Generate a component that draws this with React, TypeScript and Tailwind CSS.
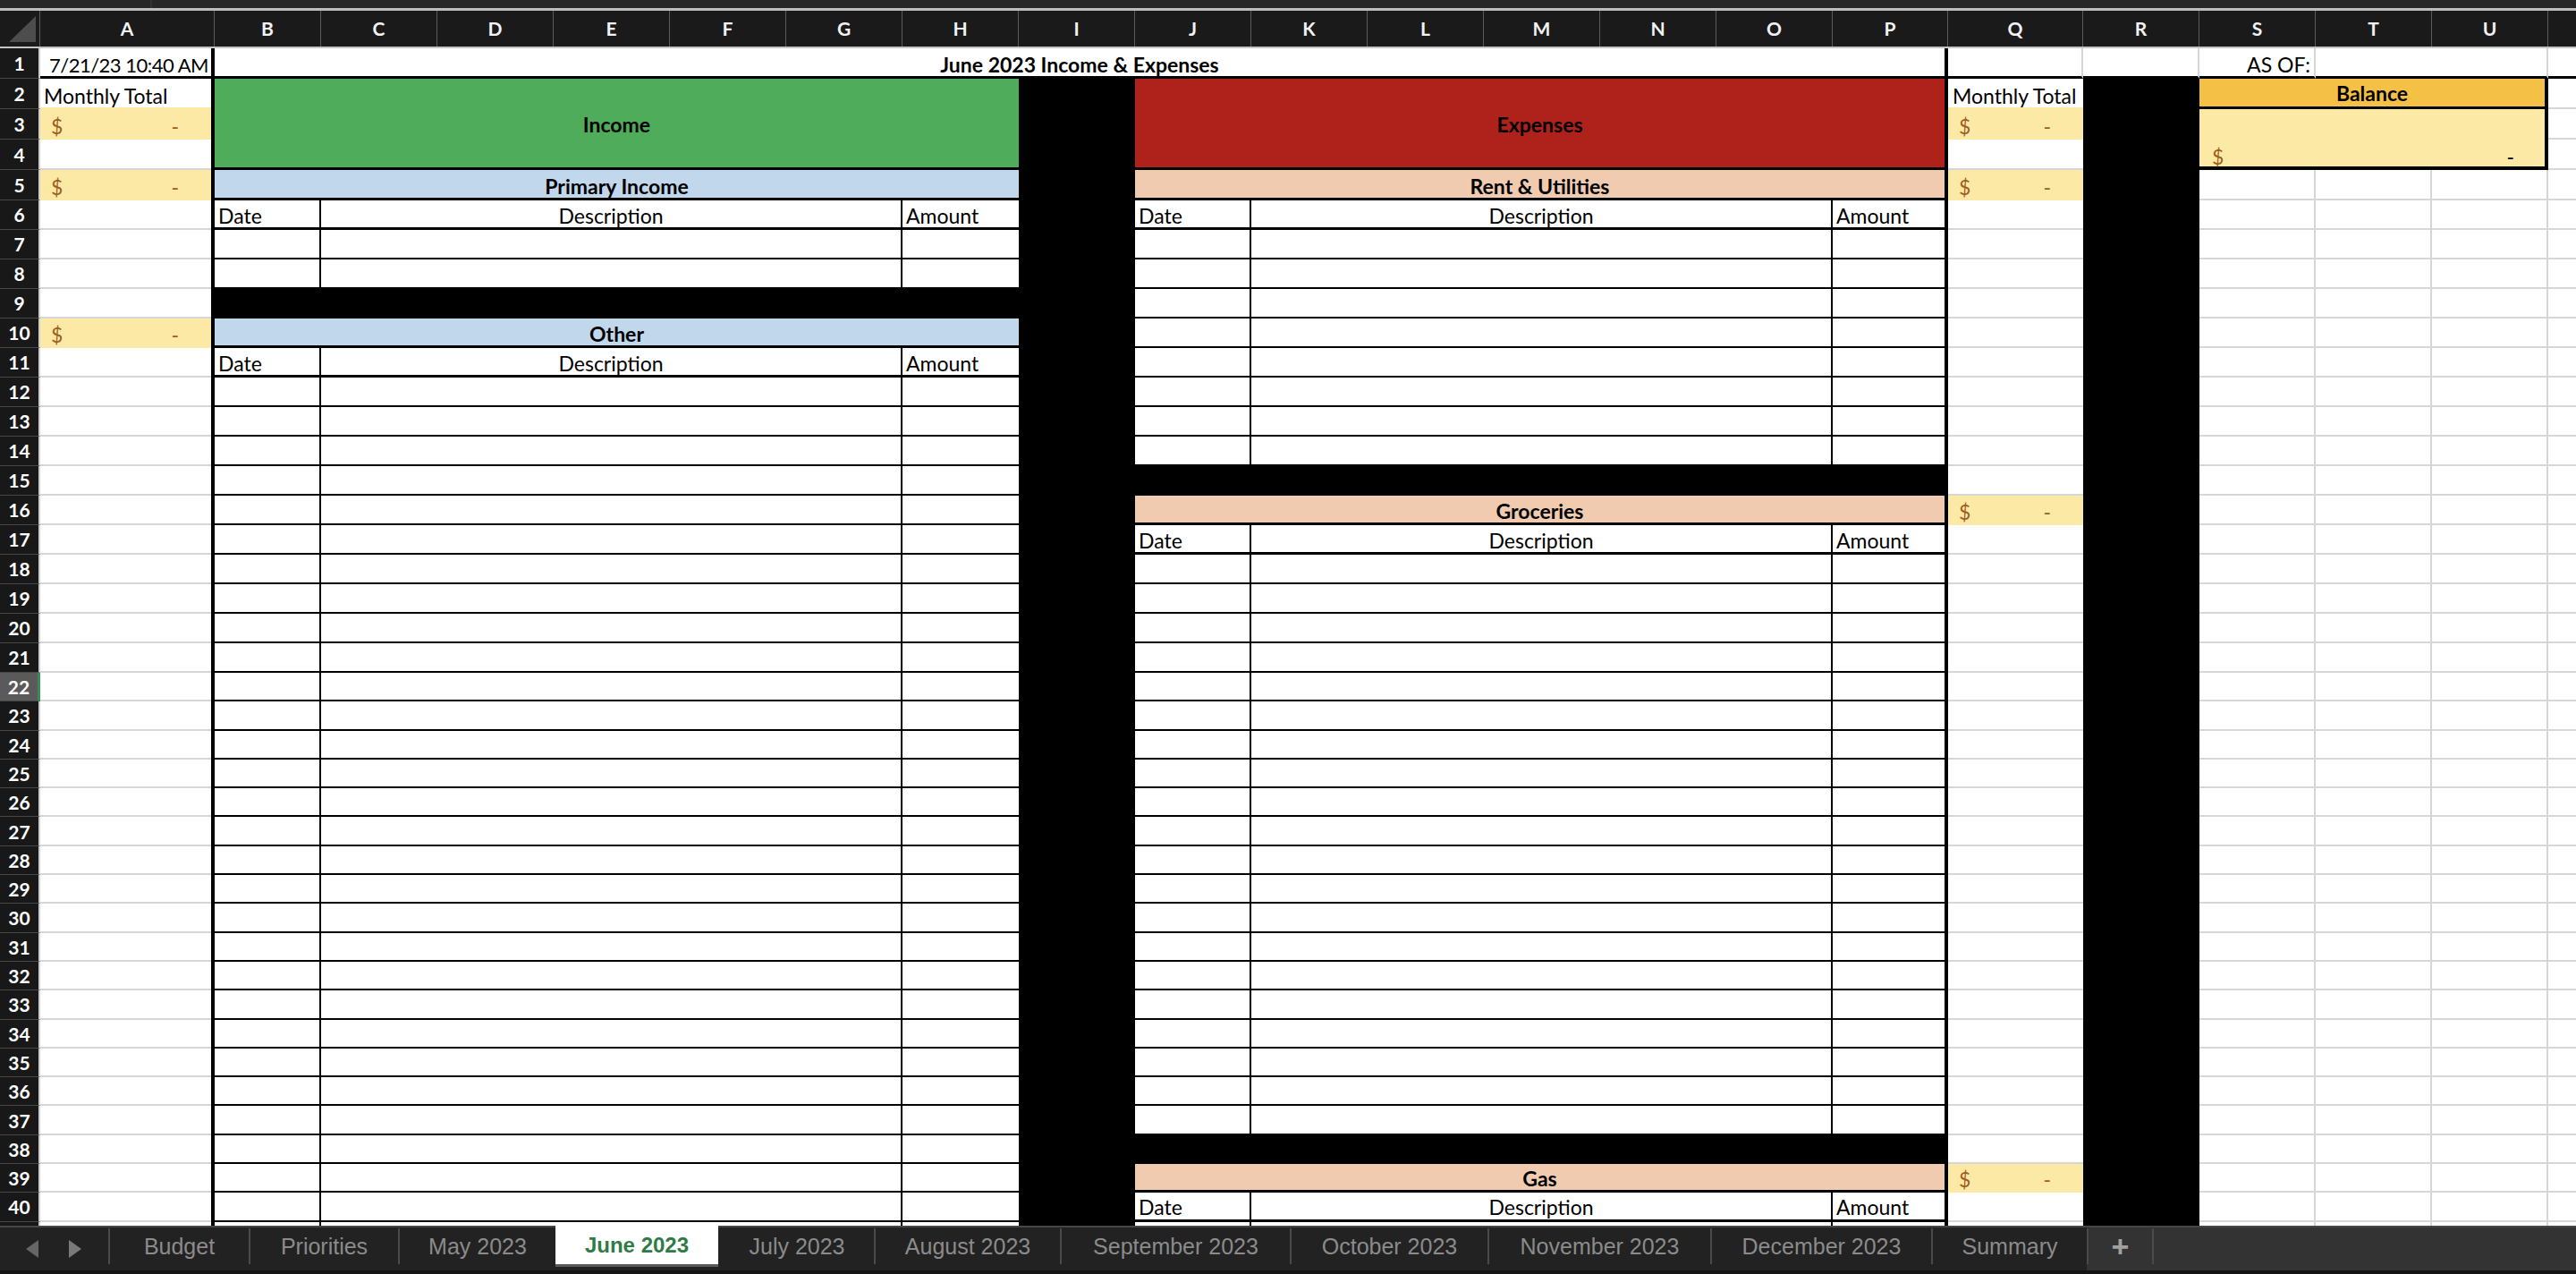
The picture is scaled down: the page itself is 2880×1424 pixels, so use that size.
import React from "react";

const rowH = (r: number) => (r <= 5 ? "h-[34px]" : r <= 21 ? "h-[33px]" : "h-[32.3px]");
const range = (a: number, b: number) => Array.from({ length: b - a + 1 }, (_, i) => a + i);

const cols = [
  { l: "A", w: "w-[195px]" },
  { l: "B", w: "w-[119px]" },
  { l: "C", w: "w-[130px]" },
  { l: "D", w: "w-[130px]" },
  { l: "E", w: "w-[130px]" },
  { l: "F", w: "w-[130px]" },
  { l: "G", w: "w-[130px]" },
  { l: "H", w: "w-[130px]" },
  { l: "I", w: "w-[130px]" },
  { l: "J", w: "w-[130px]" },
  { l: "K", w: "w-[130px]" },
  { l: "L", w: "w-[130px]" },
  { l: "M", w: "w-[130px]" },
  { l: "N", w: "w-[130px]" },
  { l: "O", w: "w-[130px]" },
  { l: "P", w: "w-[129px]" },
  { l: "Q", w: "w-[151px]" },
  { l: "R", w: "w-[130px]" },
  { l: "S", w: "w-[130px]" },
  { l: "T", w: "w-[130px]" },
  { l: "U", w: "w-[130px]" },
];

const tabs = [
  { t: "Budget", w: "w-[157px]", sep: true },
  { t: "Priorities", w: "w-[167px]", sep: true },
  { t: "May 2023", w: "w-[176px]", sep: true },
  { t: "June 2023", w: "w-[182px]", active: true },
  { t: "July 2023", w: "w-[174px]", sep: false },
  { t: "August 2023", w: "w-[208px]", sep: true },
  { t: "September 2023", w: "w-[257px]", sep: true },
  { t: "October 2023", w: "w-[221px]", sep: true },
  { t: "November 2023", w: "w-[249px]", sep: true },
  { t: "December 2023", w: "w-[247px]", sep: true },
  { t: "Summary", w: "w-[174px]", sep: true },
];

const yellowA = [3, 5, 10];
const yellowQ = [3, 5, 16, 39];
const LAST = 41;

function RowNum({ n }: { n: number }) {
  const sel = n === 22;
  return (
    <div
      className={`${rowH(n)} w-[45px] flex items-center justify-center border-b border-b-[#484848] text-[21px] font-bold text-white ${
        sel ? "bg-[#5a5a5a] border-r-[3px] border-r-[#3d8c55]" : "bg-[#181818] border-r-2 border-r-[#cdcdcd]"
      }`}
    >
      {n <= 40 ? n : ""}
    </div>
  );
}

function Money({ r }: { r: number }) {
  return (
    <div className={`${rowH(r)} bg-[#fde9a6] border-b-2 border-b-[#fde9a6] flex items-end justify-between pl-[12px] pr-[36px] text-[#9c5f1f]`}>
      <span>$</span>
      <span>-</span>
    </div>
  );
}

function Blank({ r }: { r: number }) {
  return <div className={`${rowH(r)} border-b-2 border-b-[#d6d6d6]`} />;
}

function DataRow({ r, right }: { r: number; right?: boolean }) {
  return (
    <div className={`${rowH(r)} flex border-b-2 border-b-black`}>
      <div className={`${right ? "w-[130px]" : "w-[119px]"} border-r-2 border-r-black`} />
      <div className="w-[650px] border-r-2 border-r-black" />
      <div className="flex-1" />
    </div>
  );
}

function HeadRow({ r, right }: { r: number; right?: boolean }) {
  return (
    <div className={`${rowH(r)} flex border-b-[3px] border-b-black`}>
      <div className={`${right ? "w-[130px]" : "w-[119px]"} border-r-2 border-r-black flex items-end pl-[4px]`}>Date</div>
      <div className="w-[650px] border-r-2 border-r-black flex items-end justify-center">Description</div>
      <div className="flex-1 flex items-end pl-[4px]">Amount</div>
    </div>
  );
}

function Title({ r, bg, text }: { r: number; bg: string; text: string }) {
  return (
    <div className={`${rowH(r)} ${bg} border-b-[3px] border-b-black flex items-end justify-center font-bold`}>
      {text}
    </div>
  );
}

function BlackRow({ r }: { r: number }) {
  return <div className={`${rowH(r)} bg-black`} />;
}

export default function App() {
  return (
    <div className="w-[2880px] h-[1424px] overflow-hidden bg-[#1b1b1b] font-['Lato','Liberation_Sans',sans-serif] text-[23px] text-black">
      {/* top strip */}
      <div className="h-[12px] bg-[#272727] border-b-[3px] border-b-[#bdbdbd] flex">
        <div className="w-[170px] border-r-2 border-r-[#333]" />
      </div>

      {/* column headers */}
      <div className="h-[42px] flex bg-[#1a1a1a] border-b-2 border-b-[#c4c4c4]">
        <div className="w-[45px] border-r border-r-[#5a5a5a]">
          <svg width="44" height="40" viewBox="0 0 44 40">
            <polygon points="40,6 40,35 10,35" fill="#4d4d4d" />
          </svg>
        </div>
        {cols.map((c) => (
          <div key={c.l} className={`${c.w} border-r border-r-[#5a5a5a] flex items-center justify-center text-[#f2f2f2] font-bold text-[21px]`}>
            {c.l}
          </div>
        ))}
        <div className="flex-1" />
      </div>

      {/* sheet */}
      <div className="h-[1316px] overflow-hidden bg-white leading-[1.1] whitespace-nowrap">
        {/* row 1 */}
        <div className="flex h-[34px]">
          <RowNum n={1} />
          <div className="w-[195px] border-r-4 border-r-black border-b-[3px] border-b-black flex items-end justify-end pr-[3px] text-[22px] tracking-[-0.5px]">
            7/21/23 10:40 AM
          </div>
          <div className="w-[1938px] border-r-4 border-r-black border-b-[3px] border-b-black flex items-end justify-center font-bold">
            June 2023 Income &amp; Expenses
          </div>
          <div className="w-[151px] border-r-2 border-r-[#d6d6d6] border-b-[3px] border-b-black" />
          <div className="w-[130px] border-r-2 border-r-[#d6d6d6] border-b-[3px] border-b-black" />
          <div className="w-[130px] border-r-2 border-r-[#d6d6d6] border-b-[3px] border-b-black flex items-end justify-end pr-[4px]">
            AS OF:
          </div>
          <div className="w-[260px] border-r-2 border-r-[#d6d6d6] border-b-[3px] border-b-black" />
          <div className="flex-1 border-b-[3px] border-b-black" />
        </div>

        {/* rows 2+ */}
        <div className="flex h-[1282px] overflow-hidden">
          {/* row numbers */}
          <div className="w-[45px] shrink-0 leading-[1.2]">
            {range(2, LAST).map((r) => (
              <RowNum key={r} n={r} />
            ))}
          </div>

          {/* column A */}
          <div className="w-[195px] shrink-0 border-r-4 border-r-black">
            {range(2, LAST).map((r) =>
              r === 2 ? (
                <div key={r} className={`${rowH(r)} border-b-2 border-b-[#fde9a6] flex items-end pl-[4px]`}>
                  Monthly Total
                </div>
              ) : yellowA.includes(r) ? (
                <Money key={r} r={r} />
              ) : (
                <Blank key={r} r={r} />
              )
            )}
          </div>

          {/* income table B-H */}
          <div className="w-[899px] shrink-0">
            <div className="h-[102px] bg-[#4fac5b] border-b-[3px] border-b-black flex items-center justify-center font-bold pt-[4px]">Income</div>
            <Title r={5} bg="bg-[#c0d7ec]" text="Primary Income" />
            <HeadRow r={6} />
            {range(7, 8).map((r) => (
              <DataRow key={r} r={r} />
            ))}
            <BlackRow r={9} />
            <Title r={10} bg="bg-[#c0d7ec]" text="Other" />
            <HeadRow r={11} />
            {range(12, LAST).map((r) => (
              <DataRow key={r} r={r} />
            ))}
          </div>

          {/* column I */}
          <div className="w-[130px] shrink-0 bg-black" />

          {/* expenses table J-P */}
          <div className="w-[909px] shrink-0 border-r-4 border-r-black">
            <div className="h-[102px] bg-[#ae221b] border-b-[3px] border-b-black flex items-center justify-center font-bold pt-[4px]">Expenses</div>
            <Title r={5} bg="bg-[#f1cbb0]" text="Rent & Utilities" />
            <HeadRow r={6} right />
            {range(7, 14).map((r) => (
              <DataRow key={r} r={r} right />
            ))}
            <BlackRow r={15} />
            <Title r={16} bg="bg-[#f1cbb0]" text="Groceries" />
            <HeadRow r={17} right />
            {range(18, 37).map((r) => (
              <DataRow key={r} r={r} right />
            ))}
            <BlackRow r={38} />
            <Title r={39} bg="bg-[#f1cbb0]" text="Gas" />
            <HeadRow r={40} right />
            <DataRow r={41} right />
          </div>

          {/* column Q */}
          <div className="w-[151px] shrink-0">
            {range(2, LAST).map((r) =>
              r === 2 ? (
                <div key={r} className={`${rowH(r)} border-b-2 border-b-[#fde9a6] flex items-end pl-[5px]`}>
                  Monthly Total
                </div>
              ) : yellowQ.includes(r) ? (
                <Money key={r} r={r} />
              ) : (
                <Blank key={r} r={r} />
              )
            )}
          </div>

          {/* column R */}
          <div className="w-[130px] shrink-0 bg-black" />

          {/* S-U */}
          <div className="w-[390px] shrink-0">
            <div className="h-[34px] bg-[#f4c045] border-r-4 border-r-black border-b-[3px] border-b-black flex items-center justify-center font-bold pt-[2px]">
              Balance
            </div>
            <div className="h-[68px] bg-[#fde9a6] border-r-4 border-r-black border-b-4 border-b-black flex items-end justify-between pl-[14px] pr-[34px] leading-[0.9]">
              <span className="text-[#9c5f1f]">$</span>
              <span>-</span>
            </div>
            {range(5, LAST).map((r) => (
              <div key={r} className={`${rowH(r)} flex`}>
                <div className="w-[130px] border-r-2 border-r-[#d6d6d6] border-b-2 border-b-[#d6d6d6]" />
                <div className="w-[130px] border-r-2 border-r-[#d6d6d6] border-b-2 border-b-[#d6d6d6]" />
                <div className="w-[130px] border-r-2 border-r-[#d6d6d6] border-b-2 border-b-[#d6d6d6]" />
              </div>
            ))}
          </div>

          {/* V */}
          <div className="flex-1">
            {range(2, LAST).map((r) => (
              <Blank key={r} r={r} />
            ))}
          </div>
        </div>
      </div>

      {/* sheet tabs */}
      <div className="h-[54px] flex bg-[#333333] border-t-2 border-t-[#464646] border-b-4 border-b-[#141414] font-['Liberation_Sans',sans-serif] text-[25px] whitespace-nowrap">
        <div className="flex bg-[#222222]">
          <div className="w-[121px] flex items-center gap-[34px] pl-[29px]">
            <svg width="14" height="20" viewBox="0 0 14 20">
              <polygon points="14,0 14,20 0,10" fill="#666666" />
            </svg>
            <svg width="14" height="20" viewBox="0 0 14 20">
              <polygon points="0,0 0,20 14,10" fill="#7a7a7a" />
            </svg>
          </div>
          {tabs.map((t) =>
            t.active ? (
              <div key={t.t} className={`${t.w} h-[46px] -mt-[2px] bg-white border-b-[3px] border-b-[#5b5b5b] flex items-center justify-center text-[#2f7b46] font-bold text-[24px]`}>
                {t.t}
              </div>
            ) : (
              <div key={t.t} className={`${t.w} flex`}>
                <div className={`w-[2px] h-[40px] mt-[1px] ${t.sep ? "bg-[#4a4a4a]" : ""}`} />
                <div className="flex-1 flex items-center justify-center text-[#8b8b8b] pb-[4px]">{t.t}</div>
              </div>
            )
          )}
        </div>
        <div className="w-[75px] flex">
          <div className="w-[2px] h-[40px] mt-[1px] bg-[#4a4a4a]" />
          <div className="flex-1 flex items-center justify-center text-[#a0a0a0] text-[34px] font-bold pb-[6px]">+</div>
          <div className="w-[2px] h-[40px] mt-[1px] bg-[#4a4a4a]" />
        </div>
        <div className="flex-1" />
      </div>
    </div>
  );
}
